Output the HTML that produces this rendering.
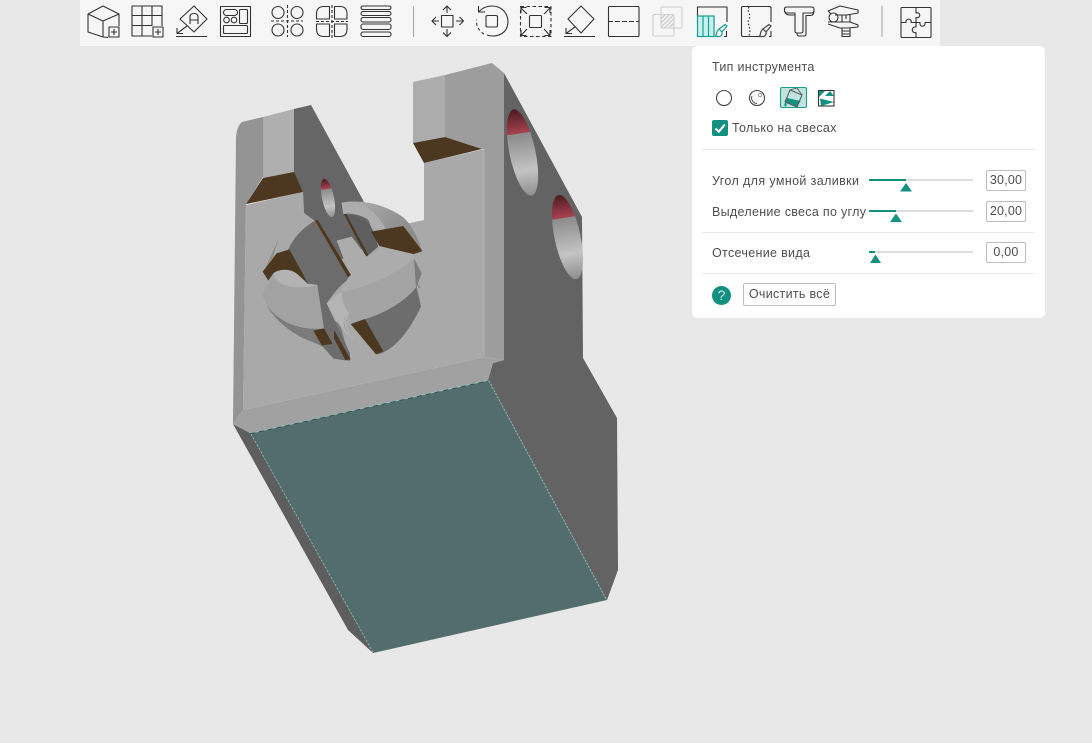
<!DOCTYPE html>
<html lang="ru"><head><meta charset="utf-8"><title>Инструмент</title>
<style>
html,body{margin:0;padding:0;width:1092px;height:743px;overflow:hidden;background:#e8e8e8}
body{position:relative;font-family:"Liberation Sans","Noto Sans CJK SC",sans-serif;color:#4e4e4e}
svg.main{position:absolute;left:0;top:0}
.t{position:absolute;font-size:12.5px;line-height:16px;white-space:nowrap;letter-spacing:.32px}
.box{position:absolute;left:986px;width:38px;height:19px;border:1px solid #bdbdbd;border-radius:2px;background:#fff;font-size:12.5px;line-height:19px;text-align:center;letter-spacing:.2px;color:#4e4e4e}
.hr{position:absolute;left:702px;width:333px;height:1px;background:#e8e8e8}
</style></head><body>
<svg class="main" width="1092" height="743" viewBox="0 0 1092 743" xmlns="http://www.w3.org/2000/svg">
<defs>
<linearGradient id="h1" gradientUnits="userSpaceOnUse" x1="518" y1="110" x2="531" y2="196">
<stop offset="0" stop-color="#4e1c24"/><stop offset=".27" stop-color="#a8434f"/><stop offset=".27" stop-color="#8b8b8b"/><stop offset=".7" stop-color="#c4c4c4"/><stop offset="1" stop-color="#8e8e8e"/></linearGradient>
<linearGradient id="h2" gradientUnits="userSpaceOnUse" x1="562" y1="195" x2="575" y2="279">
<stop offset="0" stop-color="#4e1c24"/><stop offset=".27" stop-color="#a8434f"/><stop offset=".27" stop-color="#8b8b8b"/><stop offset=".7" stop-color="#c4c4c4"/><stop offset="1" stop-color="#8e8e8e"/></linearGradient>
<linearGradient id="h3" gradientUnits="userSpaceOnUse" x1="326" y1="179" x2="331" y2="218">
<stop offset="0" stop-color="#4e1c24"/><stop offset=".25" stop-color="#a8434f"/><stop offset=".26" stop-color="#8b8b8b"/><stop offset=".7" stop-color="#c4c4c4"/><stop offset="1" stop-color="#8e8e8e"/></linearGradient>
<linearGradient id="rg" x1="0" y1="0" x2="1" y2="1"><stop offset="0" stop-color="#b0b0b0"/><stop offset=".55" stop-color="#929292"/><stop offset="1" stop-color="#858585"/></linearGradient>
<clipPath id="c1"><ellipse cx="522.500" cy="152.500" rx="13" ry="44" transform="rotate(-12 522.500 152.500)"/></clipPath>
<clipPath id="c2"><ellipse cx="567.500" cy="237" rx="13" ry="43" transform="rotate(-12 567.500 237)"/></clipPath>
<clipPath id="c3"><ellipse cx="328" cy="198" rx="6" ry="19.500" transform="rotate(-12 328 198)"/></clipPath>
<pattern id="hat" width="3" height="3" patternUnits="userSpaceOnUse" patternTransform="rotate(-45)"><rect width="3" height="3" fill="#f4f4f4"/><rect width="3" height="1.400" fill="#cfcfcf"/></pattern>
</defs>

<!-- model -->
<polygon fill="#636363" points="504,73 582,217 583,358 617,418 618,570 607,600 488,380 493,363 504,360"/>
<polygon fill="#5e5e5e" points="233,424 250,433 373,653 348,630"/>
<polygon fill="#536c6c" points="250,433 488,380 607,600 373,653"/>
<line x1="250" y1="432.800" x2="488" y2="379.800" stroke="#8fcdcb" stroke-width="2"/>
<line x1="250" y1="433.800" x2="488" y2="380.800" stroke="#3e4e4e" stroke-width="1" stroke-dasharray="5 4"/>
<line x1="489" y1="381" x2="606" y2="599" stroke="#89bcba" stroke-width="1" stroke-dasharray="2 1.500"/>
<line x1="251" y1="434" x2="373" y2="652" stroke="#89bcba" stroke-width=".8" stroke-dasharray="2 2"/>
<!-- left bevel / lower bevel -->
<path fill="#949494" d="M242,122Q237,126 236,137L233,424 243,410 246,204 263,177V117Z"/>
<polygon fill="#a1a1a1" points="243,410 485,357 504,360 493,363 488,380 250,433 233,424"/>
<!-- main face -->
<polygon fill="#a9a9a9" points="246,205 303,192 304,213 410,223 424,220 424,163 485,149 485,357 243,410"/>
<polygon fill="#9d9d9d" points="482,149 485,149 485,357 504,360 504,73 492,63 445,75 445,137"/>
<!-- arm left -->
<polygon fill="#afafaf" points="263,117 294,109 294,173 263,178"/>
<polygon fill="#666" points="294,109 311,105 363,200 380,240 340,260 315,221 304,213 303,192 294,173"/>
<polygon fill="#4c3820" points="263,178 294,172 303,192 246,204"/>
<!-- right tower -->
<polygon fill="#adadad" points="413,82 445,75 445,137 413,143"/>
<polygon fill="#4c3820" points="413,143 445,137 482,149 424,163"/>
<!-- holes -->
<rect x="500" y="105" width="45" height="95" fill="url(#h1)" clip-path="url(#c1)"/>
<rect x="545" y="190" width="45" height="95" fill="url(#h2)" clip-path="url(#c2)"/>
<rect x="315" y="175" width="26" height="46" fill="url(#h3)" clip-path="url(#c3)"/>
<!-- center cluster, zoom coordinates -->
<g transform="translate(240,190) scale(.33333)">
<path fill="#7b7b7b" d="M70,320C90,390 170,440 215,455L245,468C275,495 305,510 330,512L300,400L250,380Z"/>
<path fill="#6c6c6c" d="M145,178C165,135 195,110 225,92L328,258L320,272C290,295 275,320 260,340L330,490V512Q300,510 280,505L245,466L220,422L250,415L232,285L200,280Z"/>
<path fill="#6d6d6d" d="M335,397C420,380 490,340 530,290L543,350C510,420 470,470 425,490L408,493L375,385Z"/>
<path fill="url(#rg)" d="M305,38C360,28 430,40 490,82C520,110 535,150 547,185L515,195L430,115C405,70 355,62 310,72Z"/>
<path fill="#adadad" d="M305,38C355,32 400,50 435,112L418,172L385,90C365,75 335,68 310,72Z"/>
<path fill="#5f5f5f" d="M314,76C350,72 385,88 400,125L415,170L380,200Z"/>
<path fill="#4c3820" d="M312,72L319,72L385,195L378,200Z"/>
<path fill="#acacac" d="M290,152L335,140L380,200L435,175L522,192L522,208C480,240 400,290 305,305L320,272L330,255Z"/>
<path fill="#4c3820" d="M393,125L490,108L547,183L520,192L435,172L418,168Z"/>
<path fill="#a4a4a4" d="M305,305C400,290 480,240 522,205L530,290C490,340 420,380 335,397C320,370 308,340 305,305Z"/>
<path fill="#7c7c7c" d="M522,205L545,250L530,290L543,350L528,295Z"/>
<path fill="#4c3820" d="M225,92L233,90L333,255L324,262Z"/>
<path fill="#a2a2a2" d="M66,310L97,262C110,290 170,300 232,285L252,415C170,425 85,385 66,310Z"/>
<path fill="#b3b3b3" d="M100,250C115,238 155,232 175,255L203,282L232,285C170,300 110,290 100,250Z"/>
<path fill="#4c3820" d="M68,245L110,190L148,178L205,282L175,255C150,232 115,238 100,250L85,272Z"/>
<path fill="#8f8f8f" d="M75,235L115,148L100,200Z"/>
<path fill="#b5b5b5" d="M260,340C285,320 295,310 305,305C305,330 315,360 328,368C315,385 312,420 345,447C320,445 280,380 260,340Z"/>
<path fill="#8a8a8a" d="M322,368C305,390 312,425 340,443C315,430 300,395 322,368Z"/>
<path fill="#4c3820" d="M332,402L375,387L430,484L408,493Z"/>
<path fill="#4c3820" d="M220,422L252,415L278,462L245,466Z"/>
<path fill="#4c3820" d="M282,420L332,508L316,510L282,445Z"/>
<path fill="#888" d="M532,280L543,292L535,295Z"/>
</g>

<!-- toolbar -->
<rect x="80" y="0" width="860" height="46" fill="#f6f6f6"/>
<g fill="none" stroke="#333" stroke-width="1.100" stroke-linejoin="round">
<!-- cube -->
<path d="M108,37.500L103,37 88,32V14L103,6 119,14V26M88,14L103,21 119,14M103,21V37"/>
<rect x="109" y="27" width="10" height="10"/><path d="M114,29V35M111,32H117"/>
<!-- grid -->
<path d="M152,36H132V6H162V26M142,6V36M152,6V26M132,15.500H162M132,25.500H152"/>
<rect x="153" y="27" width="10" height="10"/><path d="M158,29V35M155,32H161"/>
<!-- diamond A -->
<path d="M194,6L207,19 194,32 180,19Z"/><path d="M176,36.500H207"/><path d="M187,26L177,33.500M177,28V33.500H183"/>
<path d="M190,24V17Q190,13.500 194,13.500Q198,13.500 198,17V24M190,20H198"/>
<!-- layout -->
<rect x="220.500" y="6.500" width="30" height="30"/>
<rect x="223.500" y="9.500" width="14" height="6" rx="3"/><rect x="239.500" y="9.500" width="8" height="14" rx="1"/>
<circle cx="226.500" cy="20" r="2.800"/><circle cx="234" cy="20" r="2.800"/><rect x="223.500" y="25.500" width="24" height="8" rx="1"/>
<!-- four circles -->
<circle cx="278" cy="12.500" r="6"/><circle cx="297" cy="12.500" r="6"/><circle cx="278" cy="30" r="6"/><circle cx="297" cy="30" r="6"/>
<path d="M287.500,5V37M271,21H303" stroke-dasharray="3 2"/>
<!-- four quads -->
<path d="M316.500,19V14Q316.500,6.500 324,6.500H329.500V19ZM347,19V14Q347,6.500 340,6.500H334.500V19ZM316.500,24V29Q316.500,36.500 324,36.500H329.500V24ZM347,24V29Q347,36.500 340,36.500H334.500V24Z"/>
<path d="M332,5V38M316,21.500H348" stroke-dasharray="3 2"/>
<!-- stack -->
<rect x="361" y="6" width="30" height="3.500" rx="1.700"/><rect x="361" y="11.500" width="30" height="4" rx="2"/><rect x="361" y="17.500" width="30" height="4.500" rx="2"/><rect x="361" y="24" width="30" height="5.500" rx="2"/><rect x="361" y="32" width="30" height="4.500" rx="2"/>
<!-- move -->
<rect x="441.500" y="15.500" width="11.500" height="11.500"/>
<path d="M447,13V6.500M443,10L447,6 451,10M447,29V36M443,32.500L447,36.500 451,32.500M439,21H432.500M436,17L432,21 436,25M456,21H463M459.500,17L463.500,21 459.500,25"/>
<!-- rotate -->
<rect x="486" y="15.500" width="11.500" height="11.500" rx="1.500"/>
<path d="M479,11.500C486,4 498,4.500 504,11 510,18 509,29 502,33.500 497,36.500 491,36.500 487,35"/>
<path d="M484,34C479,31 476,26 476.500,19.500" stroke-dasharray="3 2.500"/>
<path d="M478.500,6V12H485"/>
<!-- fit -->
<rect x="520.500" y="6.500" width="30.500" height="30" stroke-dasharray="3.500 2.500"/>
<rect x="529.500" y="15.500" width="12" height="12" rx="1"/>
<path d="M527,14L521,8M521,13V7.500H526.500M544,14L550,8M550,13V7.500H544.500M527,29L521,35.500M521,30V35.500H526.500M544,29L550,35.500M550,30V35.500H544.500"/>
<!-- diamond -->
<path d="M581,6L594,19 581,33 568,19Z"/><path d="M564,36.500H595"/><path d="M575,27L566,33.500M566,28V33.500H572"/>
<!-- rect dashed -->
<rect x="608.500" y="6.500" width="30.500" height="30" rx="1"/><path d="M608,21.500H639" stroke-dasharray="5 2"/>
<!-- paint 1 -->
<path d="M703,7H727V22M697.500,16V7H703M697.500,16H714V36M726.500,31V36.500H724"/>
<!-- paint 2 -->
<path d="M759,36.500H743Q741.500,36.500 741.500,35V8Q741.500,6.500 743,6.500H769.500Q771,6.500 771,8V22M771,31V36.500H769"/>
<path d="M749,7C746,12 752,14 749,19C746,24 752,27 749,36" stroke-width="1.200" stroke-dasharray="1.500 2"/>
<!-- T -->
<path d="M787,7H811Q814,7 814,9V10.500Q814,13 811,13H803V31Q803,33 801,33H797Q795,33 795,31V13H787Q784.500,13 784.500,11V9Q784.500,7 787,7Z"/>
<path d="M814,11Q814,15.500 810,15.500H806V34Q806,36 804,36H799Q797,36 797,33M785,11.500Q786,15 789,15H795"/>
<!-- caliper -->
<path d="M828,11L840,6 858,10V13L847,15H835M828,11L831,14"/>
<circle cx="833.500" cy="17.500" r="4.500"/>
<path d="M842,15V22M850,15V22M846,15V19M828,22H850L858,25V27L848,28H840L828,24"/>
<path d="M842,28V36.500H850V28M842,31H850M842,34H850"/>
<!-- puzzle -->
<rect x="901" y="7.500" width="30" height="30" rx="1"/>
<path d="M916,7.500V13C921,11.500 921,19 916,17.500V22.500H911C912.500,18 905,18 906,22.500H901M916,22.500V27C911,26 911,34 916,32.500V37.500M916,22.500H920C919,27.500 926,27.500 925,22.500H931"/>
</g>
<!-- brushes -->
<g fill="none" stroke="#15a193" stroke-width="1.200">
<rect x="697.500" y="16" width="16.500" height="20.500" fill="#c8f1ee"/>
<path d="M703,16V36.500M708.500,16V36.500"/>
<path d="M719,29L725,24.500 727,26 722,32ZM719,29C716,31 717,34 715.500,36.500H720C722,35 722.500,33.500 722,32"/>
</g>
<g fill="none" stroke="#444" stroke-width="1.200">
<path d="M763,29L769,24.500 771,26 766,32ZM763,29C760,31 761,34 759.500,36.500H764C766,35 766.500,33.500 766,32"/>
</g>
<!-- disabled -->
<g stroke="#cfcfcf" stroke-width="1.100" fill="none">
<rect x="661" y="14.500" width="13" height="13.500" fill="url(#hat)" stroke="none"/>
<rect x="661" y="7" width="21" height="21" rx="1"/><rect x="653" y="14.500" width="21" height="21.500" rx="1"/>
</g>
<!-- separators -->
<path d="M413.500,6V37M882,6V37" stroke="#aaa" stroke-width="1.100"/>
</svg>

<!-- panel -->
<div style="position:absolute;left:692px;top:46px;width:353px;height:272px;background:#fff;border-radius:5px"></div>
<div class="t" style="left:712px;top:59px;letter-spacing:.3px">Тип инструмента</div>

<svg style="position:absolute;left:710px;top:84px" width="130" height="28" viewBox="710 84 130 28" xmlns="http://www.w3.org/2000/svg">
<circle cx="724" cy="98" r="7.500" fill="#fff" stroke="#444" stroke-width="1.100"/>
<circle cx="757" cy="98" r="7.500" fill="#fff" stroke="#444" stroke-width="1.100"/>
<path d="M757,103.500A5.500,5.500 0 0 1 752,96" fill="none" stroke="#444" stroke-width=".9"/><circle cx="760" cy="95" r="1.800" fill="none" stroke="#888" stroke-width=".8"/>
<rect x="780.500" y="87.500" width="26" height="20" rx="1.500" fill="#bfe3de" stroke="#1b9c8c" stroke-width="1.100"/>
<path d="M787,98L800.500,101 797,107 785,102Z" fill="#149080"/>
<path d="M790,90L802,95 797,107 785,102Z" fill="none" stroke="#555" stroke-width="1"/>
<path d="M790,90L797,88 802,95" fill="none" stroke="#555" stroke-width=".9"/>
<path d="M785.500,102.500C784,104 784,106.500 785.500,106.500 787,106.500 787,104 785.500,102.500Z" fill="#149080"/>
<rect x="818.500" y="90.500" width="15.500" height="15.500" fill="#fff" stroke="#333" stroke-width="1.100"/>
<path d="M819,91H825L819,97ZM825,96L830,91 834,96ZM820,98.500L834,102 821,106Z" fill="#149080"/>
</svg>

<div style="position:absolute;left:712px;top:120px;width:16px;height:16px;background:#12907f;border-radius:2px"></div>
<svg style="position:absolute;left:712px;top:120px" width="16" height="16" xmlns="http://www.w3.org/2000/svg"><path d="M3.500,8.500L6.800,11.700 12.800,4.500" fill="none" stroke="#fff" stroke-width="2.100"/></svg>
<div class="t" style="left:732px;top:120px">Только на свесах</div>
<div class="hr" style="top:149px"></div>

<div class="t" style="left:712px;top:173px;letter-spacing:.38px">Угол для умной заливки</div>
<div class="t" style="left:712px;top:204px;letter-spacing:.3px">Выделение свеса по углу</div>
<div class="t" style="left:712px;top:245px">Отсечение вида</div>

<svg style="position:absolute;left:865px;top:170px" width="112" height="100" viewBox="865 170 112 100" xmlns="http://www.w3.org/2000/svg">
<g fill="#ddd"><rect x="869" y="179" width="104" height="2"/><rect x="869" y="210" width="104" height="2"/><rect x="869" y="251" width="104" height="2"/></g>
<g fill="#149080"><rect x="869" y="179" width="37" height="2"/><rect x="869" y="210" width="27" height="2"/><rect x="869" y="251" width="6" height="2"/>
<path d="M900,191.500L906,183 912,191.500Z"/><path d="M890,222L896,213.500 902,222Z"/><path d="M870,263L875.500,254.500 881,263Z"/></g>
</svg>

<div class="box" style="top:170px">30,00</div>
<div class="box" style="top:201px">20,00</div>
<div class="box" style="top:242px">0,00</div>
<div class="hr" style="top:232px"></div>
<div class="hr" style="top:273px"></div>

<div style="position:absolute;left:712px;top:286px;width:19px;height:19px;border-radius:50%;background:#12907f;color:#d8f0ec;font-size:14px;line-height:19px;text-align:center">?</div>
<div style="position:absolute;left:743px;top:283px;width:91px;height:21px;border:1px solid #bdbdbd;border-radius:2px;font-size:12.5px;line-height:21px;text-align:center;letter-spacing:.3px;color:#4e4e4e">Очистить всё</div>
</body></html>
